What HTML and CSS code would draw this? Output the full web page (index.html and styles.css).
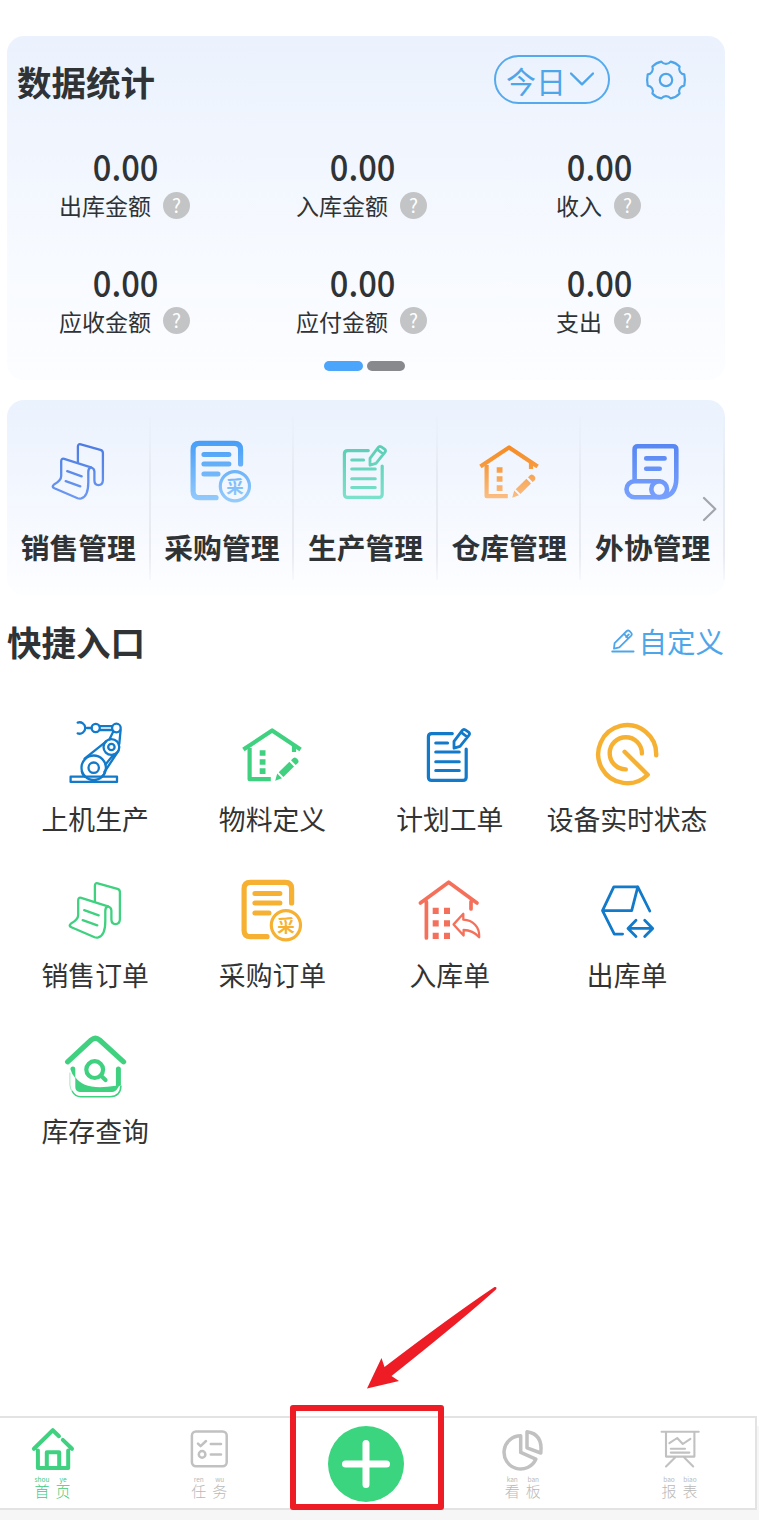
FILE: index.html
```html
<!DOCTYPE html>
<html lang="zh-CN">
<head>
<meta charset="utf-8">
<title>首页</title>
<link rel="stylesheet" href="styles.css">
</head>
<body>
<svg class="defs" width="0" height="0" aria-hidden="true">
  <defs>
    <linearGradient id="g-sales" gradientUnits="userSpaceOnUse" x1="0" y1="0" x2="0" y2="64"><stop offset="0" stop-color="#4a7ae0"/><stop offset="1" stop-color="#6f9bf5"/></linearGradient>
    <linearGradient id="g-buy" gradientUnits="userSpaceOnUse" x1="0" y1="0" x2="0" y2="64"><stop offset="0" stop-color="#469df7"/><stop offset="1" stop-color="#98cdfc"/></linearGradient>
    <linearGradient id="g-make" gradientUnits="userSpaceOnUse" x1="0" y1="0" x2="0" y2="64"><stop offset="0" stop-color="#58ccb4"/><stop offset="1" stop-color="#7ee3cc"/></linearGradient>
    <linearGradient id="g-store" gradientUnits="userSpaceOnUse" x1="0" y1="0" x2="0" y2="64"><stop offset="0" stop-color="#f5861c"/><stop offset=".4" stop-color="#f79a3e"/><stop offset="1" stop-color="#fbc48f"/></linearGradient>
    <linearGradient id="g-out" gradientUnits="userSpaceOnUse" x1="0" y1="0" x2="0" y2="64"><stop offset="0" stop-color="#5585f2"/><stop offset="1" stop-color="#7ca4ff"/></linearGradient>
  </defs>
  <symbol id="i-sales" viewBox="0 0 64 64">
    <g class="line" stroke-width="2.3">
      <path d="M30.9 22.7V6.6Q30.9 3.6 33.8 4.4L53.4 9.8Q55.9 10.5 55.9 13V40.3Q55.7 45 51.5 45.2Q47.4 45 47.4 40.3V31.5Q47.3 28.6 43.9 27.3"/>
      <path d="M14.2 36V21.4Q14.2 18 17.2 18.9L43.9 27.3Q41.2 28 41.3 32V42C41.3 51 39 57 34.3 58.4Q32.4 58.9 30.6 58.2L7.4 48.2Q4.2 46.6 7 44.6Q14.2 40.5 14.2 36Z"/>
      <path d="M20.2 31.2L34.7 36.4M18.7 41.2L33.3 46.4"/>
    </g>
  </symbol>
  <symbol id="i-buy" viewBox="0 0 64 64">
    <g class="line">
      <path stroke-width="5.2" d="M26 57.7H9.4Q3.1 57.7 3.1 51.4V9.7Q3.1 3.4 9.4 3.4H44.3Q50.6 3.4 50.6 9.7V24"/>
      <path stroke-width="5" d="M13.9 14.4H38.9M13.9 24.1H38.9M13.9 34H28"/>
      <circle stroke-width="3.2" cx="44.9" cy="46.3" r="14.6"/>
    </g>
  </symbol>
  <symbol id="i-doc" viewBox="0 0 64 64">
    <g class="line" stroke-width="3.2">
      <path d="M34.3 10.6H13.6Q10.4 10.6 10.4 13.8V54.2Q10.4 57.4 13.6 57.4H45Q48.2 57.4 48.2 54.2V26"/>
      <path stroke-width="3" d="M17.7 20H29.6M17.7 29H41.3M17.7 38.7H41.3M17.7 47.5H41.3"/>
      <path stroke-width="2.8" d="M36 25.2V18.4L44.3 7.4Q45.6 5.8 47.3 6.9L50.6 9.2Q52.3 10.5 51 12.2L42 23.4ZM43.2 9.3L49.3 14"/>
    </g>
  </symbol>
  <symbol id="i-store" viewBox="0 0 64 64">
    <g class="line square" stroke-width="4.2">
      <path d="M2.4 26.6L31.1 7.4L59.6 26.6"/>
      <path d="M8.6 25V56.2H29.8M53 23V29"/>
    </g>
    <g class="solid">
      <path d="M18.7 27.2h5.8v5.6h-5.8zM18.7 36.2h5.8v5.6h-5.8zM18.7 45.3h5.8v5.6h-5.8z"/>
      <path d="M34.2 57.7L36.2 50.6L41 55.3ZM37.7 49.2L48.4 38.8L53 43.5L42.4 53.9ZM50 37.2L52.3 35Q54.3 33.6 56.6 36.2Q58.4 38.4 57 40L54.7 42.1Z"/>
    </g>
  </symbol>
</svg>

<main class="page">
  <section class="card stats">
    <header class="stats-head">
      <h2>数据统计</h2>
      <div class="pill"><span>今日</span><svg width="24" height="14" viewBox="0 0 24 14"><path class="line" d="M1 1.5L12 12.3L23 1.5"/></svg></div>
      <svg class="gear" width="42" height="42" viewBox="-21 -21 42 42"><path class="line" d="M4.6 -18.4Q10 -17.4 13.6 -13.4A5.6 5.6 0 0 0 18.3 -5.6Q19.5 0 18.3 5.6A5.6 5.6 0 0 0 13.6 13.4Q10 17.4 4.6 18.4A5.8 5.8 0 0 0 -4.6 18.4Q-10 17.4 -13.6 13.4A5.6 5.6 0 0 0 -18.3 5.6Q-19.5 0 -18.3 -5.6A5.6 5.6 0 0 0 -13.6 -13.4Q-10 -17.4 -4.6 -18.4A5.8 5.8 0 0 0 4.6 -18.4Z"/><circle class="line" r="6.2"/></svg>
    </header>
    <div class="stats-grid">
      <div class="stat"><b>0.00</b><p>出库金额<i>?</i></p></div>
      <div class="stat"><b>0.00</b><p>入库金额<i>?</i></p></div>
      <div class="stat"><b>0.00</b><p>收入<i>?</i></p></div>
      <div class="stat"><b>0.00</b><p>应收金额<i>?</i></p></div>
      <div class="stat"><b>0.00</b><p>应付金额<i>?</i></p></div>
      <div class="stat"><b>0.00</b><p>支出<i>?</i></p></div>
    </div>
    <div class="dots"><span class="on"></span><span></span></div>
  </section>

  <section class="card menu">
    <a><svg class="ico" fill="url(#g-sales)" stroke="url(#g-sales)"><use href="#i-sales"/></svg>销售管理</a>
    <a><svg class="ico" viewBox="0 0 64 64" fill="url(#g-buy)" stroke="url(#g-buy)"><use href="#i-buy"/><text class="solid seal" x="44.9" y="52.8">采</text></svg>采购管理</a>
    <a><svg class="ico" fill="url(#g-make)" stroke="url(#g-make)"><use href="#i-doc"/></svg>生产管理</a>
    <a><svg class="ico" fill="url(#g-store)" stroke="url(#g-store)"><use href="#i-store"/></svg>仓库管理</a>
    <a><svg class="ico" viewBox="0 0 64 64" stroke="url(#g-out)"><g class="line" stroke-width="4.6"><path d="M13.6 41V9.4Q13.6 6.2 16.8 6.2H52Q55.3 6.2 55.3 9.4V38Q55.3 57.2 38.5 57.2H13.5A8 8 0 0 1 13.5 41.2H38.2"/><circle cx="38.2" cy="49.2" r="7.9"/><path d="M25.2 18.4H43.6M25.2 28.7H38.7"/></g></svg>外协管理</a>
    <svg class="more" width="16" height="26" viewBox="0 0 16 26"><path class="line" d="M2 2L13.3 13L2 24"/></svg>
  </section>

  <header class="quick-head">
    <h2>快捷入口</h2>
    <a><svg width="24" height="24" viewBox="0 0 24 24"><path class="line" d="M1.2 22.5H22.6M3 19.7L3.6 14.2L15.8 2Q17.2 .9 18.6 2.2L20.3 4Q21.3 5.3 20.2 6.6L8.3 18.4ZM13 4.9L17.3 9.3M15.2 8.2L17.8 5.4"/></svg>自定义</a>
  </header>

  <section class="quick">
    <a><svg class="ico blue" viewBox="0 0 64 64"><g class="line" stroke-width="2.3"><path d="M13.7 -.4A5.7 5.7 0 1 1 13.7 10.4M22.8 5H27.6M35.7 3.1H48.2M35.7 7H48.2M49.3 8.6L45.4 16.4M56.6 7.2L55.3 21M42 18.6L20.6 35.6M54.6 27.6L40.4 49M49.5 31.6L41.5 41.5M17.8 48.6Q18.5 52 20.6 53.6M41 48.5Q40.5 51.5 38.2 53.6"/><circle cx="31.7" cy="5" r="4.1"/><circle cx="52.4" cy="5" r="4.3"/><circle cx="47.4" cy="24" r="7.9"/><circle cx="47.4" cy="24" r="3.2"/><circle cx="29.7" cy="44.7" r="12.2"/><circle cx="29.7" cy="44.7" r="5.2"/><path d="M6.6 53.7H53V58.9H6.6Z"/></g></svg>上机生产</a>
    <a><svg class="ico green"><use href="#i-store"/></svg>物料定义</a>
    <a><svg class="ico blue left"><use href="#i-doc"/></svg>计划工单</a>
    <a><svg class="ico amber" viewBox="0 0 64 64"><g class="line" stroke-width="4.4"><path d="M60.2 32.3A29 29 0 1 0 51.7 51.7L28.6 28.8"/><path d="M45.9 30.4A16.1 16.1 0 1 0 29.8 46.4"/></g></svg>设备实时状态</a>
    <a><svg class="ico green"><use href="#i-sales"/></svg>销售订单</a>
    <a><svg class="ico amber" viewBox="0 0 64 64"><use href="#i-buy"/><text class="solid seal" x="44.9" y="52.8">采</text></svg>采购订单</a>
    <a><svg class="ico coral left" viewBox="0 0 64 64"><g class="line"><path stroke-width="3.7" d="M2.4 24L30.7 3.2L59 24M8.4 22.7V59M53 22.7V30"/><path stroke-width="2.3" d="M35.6 45.4L45.3 34.8V40.7C55 41.2 61.8 48 61.2 58.3Q54.8 51 45.6 51V56.6Z"/></g><path class="solid" d="M14.7 28.7h6v6.3h-6zM26 28.7h6v6.3h-6zM14.7 41.2h6v6.3h-6zM26 41.2h6v6.3h-6zM14.7 53.7h6v6.3h-6zM26 53.7h6v6.3h-6z"/></svg>入库单</a>
    <a><svg class="ico blue left" viewBox="0 0 64 64"><path class="line" stroke-width="2.8" d="M54.8 32L42.8 7.8H18.8L7.5 31.7H36.7L42.8 7.8M7.5 31.7L19.3 55.1H27.6M33.2 49.4H57.5M41 41.3L33 49.4L41 57.5M49.7 41.3L57.7 49.4L49.7 57.5"/></svg>出库单</a>
    <a><svg class="ico green" viewBox="0 0 64 64"><g class="line"><path stroke-width="5.2" d="M3.6 26.8L27.2 5Q31.4 1.4 35.6 5L59.6 26.8"/><circle stroke-width="4.2" cx="30.7" cy="34.6" r="8.4"/><path stroke-width="4.2" d="M37 40.8L41.5 45"/><path stroke-width="1.5" d="M8.4 56.5Q11 61.7 17 61.7H46Q56.6 61.5 56.9 51"/><path stroke-width=".5" d="M5.9 38V50Q6 54 8.4 56.5"/></g><path class="solid" d="M6.4 34.2Q6.4 31.6 8.9 31.6Q11.3 31.6 11.3 34.2V42.3C18 51.5 30 54 51.9 50.8V34.2Q51.9 31.6 54.4 31.6Q56.9 31.6 56.9 34.2V50.2Q54.5 50.4 53.5 53.5Q51.5 56.9 48 56.9H16Q11.3 56.7 11.3 52V43Q7.5 38.5 6.4 34.2Z"/></svg>库存查询</a>
  </section>

  <nav class="tabs">
    <a class="tab active"><svg width="44" height="44"><path class="line" stroke-width="4" d="M2.9 21.8L21.8 3.2L28 9.2M31.8 12.9L41 21.8M6.9 23.5V41H37.2V23.5M15.8 40.5V25.2H28.2V40.5"/></svg><ruby>首<rt>shou</rt></ruby><ruby>页<rt>ye</rt></ruby></a>
    <a class="tab"><svg width="44" height="44"><g class="line" stroke-width="2.5"><rect x="4.9" y="4.5" width="34.8" height="34.8" rx="4"/><path d="M11 16.6L13.6 19.2L19 14M23.8 17H34M23.8 27.4H34"/><circle cx="15.1" cy="27.4" r="3.3"/></g></svg><ruby>任<rt>ren</rt></ruby><ruby>务<rt>wu</rt></ruby></a>
    <a class="plus"><svg width="76" height="76" viewBox="-38 -38 76 76"><circle r="38"/><path d="M-20.5 0H20.5M0 -20.5V20.5"/></svg></a>
    <a class="tab"><svg width="44" height="44"><g class="line square" stroke-width="3.5"><path d="M19.7 8.8A16.6 16.6 0 1 0 34.8 32.2L19.7 25.4Z"/><path d="M26 4.8V20.8L39.8 26Q42 7 26 4.8Z"/></g></svg><ruby>看<rt>kan</rt></ruby><ruby>板<rt>ban</rt></ruby></a>
    <a class="tab"><svg width="44" height="44"><g class="line" stroke-width="2.1"><path d="M3.6 4.7H40.7M8 4.7V29.6H36.4V4.7M11.4 16.2L19.2 11L24.8 17L32.4 11.8M12.8 21.7H27M12.8 25.6H31.4M17.3 30.3L8 39.5M26 30.3L35.2 39.5"/></g></svg><ruby>报<rt>bao</rt></ruby><ruby>表<rt>biao</rt></ruby></a>
    <div class="highlight"></div>
    <svg class="arrow" width="132" height="104" viewBox="366 1286 132 104"><path d="M494.5 1287Q497.5 1286.5 496 1289.5Q462 1320 391.5 1376L399 1381L367 1388.5L381.5 1358L384.5 1367Q450 1317 494.5 1287Z"/></svg>
  </nav>
</main>
</body>
</html>
```
FILE: styles.css
```css
* { box-sizing: border-box; }
body {
  margin: 0;
  background: #fff;
  color: #2f3335;
  font-family: "Noto Sans CJK SC", "Noto Sans", sans-serif;
}
h2, p { margin: 0; }
.defs { position: absolute; }
.page {
  display: flex;
  flex-direction: column;
  width: 759px;
  height: 1520px;
  padding-top: 36px;
  overflow: hidden;
}
.line { fill: none; stroke-linecap: round; stroke-linejoin: round; }
.square { stroke-linecap: butt; stroke-linejoin: round; }
.solid { stroke: none; }
.seal { font-size: 17.5px; font-weight: 700; text-anchor: middle; }

.card {
  width: 718px;
  margin-left: 7px;
  border-radius: 17px;
}
h2 { font-size: 34.5px; line-height: 50px; font-weight: 700; }

.stats {
  height: 344px;
  padding-top: 19px;
  background: linear-gradient(#ebf2fd, #f0f5fe 28%, #f7faff 66%, #fcfdff);
}
.stats-head {
  display: flex;
  align-items: center;
  height: 49px;
  padding: 0 38px 0 10px;
  color: #4ea6ea;
}
.stats-head h2 { margin-right: auto; padding-top: 2px; color: #2f3335; }
.pill {
  display: flex;
  align-items: center;
  justify-content: center;
  gap: 4px;
  width: 116px;
  height: 49px;
  margin-right: 35px;
  padding: 0 4px 1px 0;
  border: 2px solid #55aaed;
  border-radius: 25px;
  font-size: 30px;
  line-height: 44px;
  font-weight: 400;
}
.pill span { padding-top: 2px; }
.pill .line { stroke: #4ea6ea; stroke-width: 2.4; }
.gear .line { stroke: #4ea6ea; stroke-width: 2.2; }

.stats-grid {
  display: grid;
  grid-template-columns: repeat(3, 237px);
  row-gap: 35.5px;
  padding-top: 42px;
}
.stat {
  display: flex;
  flex-direction: column;
  align-items: center;
  height: 80px;
}
.stat b {
  margin-left: 1px;
  font-size: 35.5px;
  line-height: 39px;
  font-weight: 500;
  transform: scaleX(.92);
}
.stat p {
  display: flex;
  align-items: center;
  gap: 12px;
  margin-right: 2px;
  font-size: 23px;
  line-height: 40px;
  font-weight: 400;
}
.stat i {
  width: 27px;
  height: 27px;
  border-radius: 50%;
  background: #c3c4c5;
  color: #fff;
  font: 400 19px/26px "Noto Sans CJK SC", sans-serif;
  text-align: center;
}
.dots {
  display: flex;
  justify-content: center;
  gap: 4px;
  padding-top: 19px;
  margin-left: -3px;
}
.dots span { width: 38.5px; height: 10px; border-radius: 5px; background: #88898d; }
.dots .on { background: #4aa5fb; }

.menu {
  position: relative;
  display: grid;
  grid-template-columns: repeat(5, 1fr);
  height: 195px;
  margin-top: 20px;
  background: linear-gradient(#eaf2fd, #f0f5fe 30%, #f9fbff 80%, #fdfeff);
}
.menu a {
  display: flex;
  flex-direction: column;
  align-items: center;
  height: 163px;
  margin-top: 17px;
  padding: 23px 0 0 1px;
  border-right: 2px solid;
  border-image: linear-gradient(rgba(230,235,243,.2), #e6ebf3 35%, #e8ebf1 85%, rgba(230,235,243,.2)) 1;
  font-size: 28.8px;
  line-height: 42px;
  font-weight: 700;
}
.ico { flex: none; width: 64px; height: 64px; overflow: visible; }
.menu .ico { margin: 0 0 22px 1px; }
.more { position: absolute; right: 7px; top: 96px; }
.more .line { stroke: #a2a5aa; stroke-width: 2.2; }

.quick-head {
  display: flex;
  align-items: center;
  justify-content: space-between;
  width: 718px;
  height: 50px;
  margin: 21px 0 0 7px;
}
.quick-head a {
  display: flex;
  align-items: center;
  gap: 3px;
  margin-right: 1px;
  color: #4ea6ea;
  font-size: 28.5px;
  line-height: 42px;
  font-weight: 400;
}
.quick-head svg { margin-bottom: 1px; }
.quick-head svg .line { stroke: #4ea6ea; stroke-width: 1.8; }

.quick {
  display: grid;
  grid-template-columns: repeat(4, 177.3px);
  grid-auto-rows: 156px;
  margin: 57px 0 0 6.5px;
}
.quick a {
  display: flex;
  flex-direction: column;
  align-items: center;
  gap: 12px;
  color: #333;
  font-size: 26.8px;
  line-height: 40px;
  font-weight: 400;
  white-space: nowrap;
}
.quick .ico { margin-left: 2px; }
.quick .left { margin-left: 0; }
.blue { stroke: #127ac9; fill: #127ac9; }
.green { stroke: #3fd17f; fill: #3fd17f; }
.amber { stroke: #f6b133; fill: #f6b133; }
.coral { stroke: #f5705a; fill: #f5705a; }

.tabs {
  position: relative;
  display: flex;
  justify-content: space-between;
  width: 757px;
  height: 94px;
  margin-top: auto;
  margin-bottom: 10px;
  padding: 9px 53.5px 0 30.5px;
  border: 2px solid #e3e3e4;
  border-left: 0;
  box-shadow: 0 10px 0 #f6f6f6, 2px 10px 0 #f6f6f6;
}
.tab {
  display: flex;
  flex-wrap: wrap;
  align-content: flex-start;
  justify-content: center;
  width: 44px;
  color: #b9b9b9;
  font-size: 15px;
  line-height: 15px;
  font-weight: 300;
}
.tab svg { stroke: #c1c1c1; margin-bottom: 4px; }
.tab.active { color: #3fca7d; }
.tab.active svg { stroke: #3fd17f; }
ruby {
  display: flex;
  flex-direction: column-reverse;
  align-items: center;
  width: 21px;
}
rt { font-size: 6.5px; line-height: 8px; font-weight: 400; }
.plus { margin: -1px -16px 0; }
.plus circle { fill: #3bd47f; }
.plus path { stroke: #fff; stroke-width: 7; stroke-linecap: round; }
.highlight {
  position: absolute;
  left: 290px;
  top: -13px;
  width: 154px;
  height: 105px;
  border: 6px solid #ee1c25;
  border-radius: 3px;
}
.arrow { position: absolute; left: 366px; top: -132px; fill: #ee1c25; }
```
